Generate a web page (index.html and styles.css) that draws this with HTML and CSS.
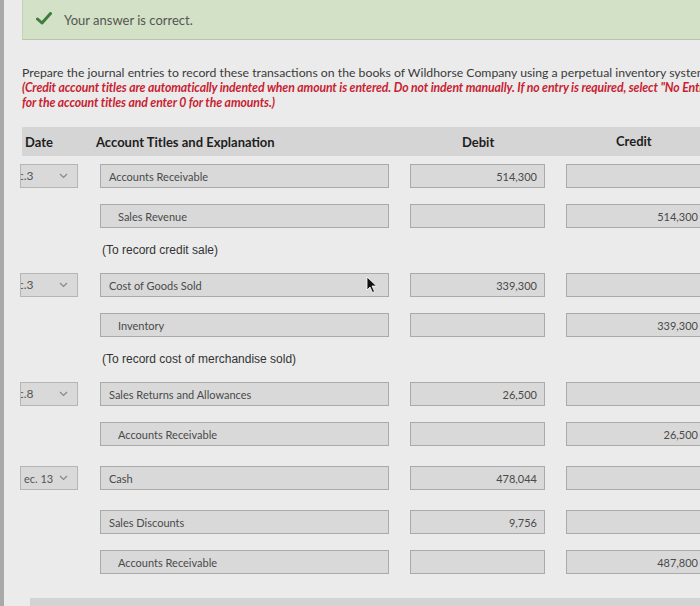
FILE: index.html
```html
<!DOCTYPE html>
<html>
<head>
<meta charset="utf-8">
<link rel="stylesheet" href="styles.css">
</head>
<body>
<div class="page">
  <div class="banner">
    <svg class="check" width="16" height="13" viewBox="0 0 16 13"><path d="M1.5 7 L6 11 L14.5 1.5" fill="none" stroke="#3f7d3c" stroke-width="3" stroke-linecap="round" stroke-linejoin="round"/></svg>
    <span class="banner-text">Your answer is correct.</span>
  </div>

  <p class="prompt">Prepare the journal entries to record these transactions on the books of Wildhorse Company using a perpetual inventory system.<br>
  <span class="note">(Credit account titles are automatically indented when amount is entered. Do not indent manually. If no entry is required, select "No Entry"<br>for the account titles and enter 0 for the amounts.)</span></p>

  <div class="head">
    <div class="h-date">Date</div>
    <div class="h-acct">Account Titles and Explanation</div>
    <div class="h-debit">Debit</div>
    <div class="h-credit">Credit</div>
  </div>

  <div class="rows">
    <div class="row">
      <div class="date"><span class="dtxt">c.3</span><svg class="chev" width="9" height="6" viewBox="0 0 9 6"><path d="M1 1 L4.5 4.5 L8 1" fill="none" stroke="#888" stroke-width="1.2"/></svg></div>
      <div class="box acct">Accounts Receivable</div>
      <div class="box amt debit">514,300</div>
      <div class="box amt credit"></div>
    </div>
    <div class="row">
      <div class="date-empty"></div>
      <div class="box acct cr">Sales Revenue</div>
      <div class="box amt debit"></div>
      <div class="box amt credit">514,300</div>
    </div>
    <div class="expl">(To record credit sale)</div>

    <div class="row">
      <div class="date"><span class="dtxt">c.3</span><svg class="chev" width="9" height="6" viewBox="0 0 9 6"><path d="M1 1 L4.5 4.5 L8 1" fill="none" stroke="#888" stroke-width="1.2"/></svg></div>
      <div class="box acct">Cost of Goods Sold</div>
      <div class="box amt debit">339,300</div>
      <div class="box amt credit"></div>
    </div>
    <div class="row">
      <div class="date-empty"></div>
      <div class="box acct cr">Inventory</div>
      <div class="box amt debit"></div>
      <div class="box amt credit">339,300</div>
    </div>
    <div class="expl">(To record cost of merchandise sold)</div>

    <div class="row">
      <div class="date"><span class="dtxt">c.8</span><svg class="chev" width="9" height="6" viewBox="0 0 9 6"><path d="M1 1 L4.5 4.5 L8 1" fill="none" stroke="#888" stroke-width="1.2"/></svg></div>
      <div class="box acct">Sales Returns and Allowances</div>
      <div class="box amt debit">26,500</div>
      <div class="box amt credit"></div>
    </div>
    <div class="row">
      <div class="date-empty"></div>
      <div class="box acct cr">Accounts Receivable</div>
      <div class="box amt debit"></div>
      <div class="box amt credit">26,500</div>
    </div>

    <div class="row spaced">
      <div class="date"><span class="dtxt wide">ec. 13</span><svg class="chev" width="9" height="6" viewBox="0 0 9 6"><path d="M1 1 L4.5 4.5 L8 1" fill="none" stroke="#888" stroke-width="1.2"/></svg></div>
      <div class="box acct">Cash</div>
      <div class="box amt debit">478,044</div>
      <div class="box amt credit"></div>
    </div>
    <div class="row spaced">
      <div class="date-empty"></div>
      <div class="box acct">Sales Discounts</div>
      <div class="box amt debit">9,756</div>
      <div class="box amt credit"></div>
    </div>
    <div class="row">
      <div class="date-empty"></div>
      <div class="box acct cr">Accounts Receivable</div>
      <div class="box amt debit"></div>
      <div class="box amt credit">487,800</div>
    </div>
  </div>

  <div class="footer-bar"></div>

  <svg class="cursor" width="12" height="18" viewBox="0 0 12 18"><path d="M1 1 L1 14 L4 11 L6.5 16.5 L8.5 15.5 L6 10 L10.5 10 Z" fill="#111" stroke="#fff" stroke-width="0.8"/></svg>
</div>
</body>
</html>
```

FILE: styles.css
```css
html, body {
  margin: 0;
  padding: 0;
}
body {
  width: 700px;
  height: 606px;
  overflow: hidden;
  background: #ebebeb;
  font-family: Lato, "Open Sans", sans-serif;
  color: #333;
}
.page {
  position: relative;
  width: 700px;
  height: 606px;
  overflow: hidden;
  border-left: 4px solid #a9a9a9;
  box-sizing: border-box;
}
.banner {
  margin-left: 18px;
  width: 720px;
  height: 40px;
  background: #d3e1c6;
  border-bottom: 1px solid #b7c5ab;
  border-left: 1px solid #c4d1b8;
  display: flex;
  align-items: center;
  box-sizing: border-box;
  padding-left: 13px;
}
.check {
  margin-right: 12px;
  margin-top: -2px;
}
.banner-text {
  font-size: 13px;
  color: #555;
}
.prompt {
  margin: 25px 0 0 18px;
  font-size: 12.25px;
  line-height: 15px;
  color: #3a3a3a;
  white-space: nowrap;
}
.note {
  color: #c81f33;
  font-style: italic;
  font-weight: 700;
  letter-spacing: -0.12px;
}
.head {
  margin: 17px 0 0 18px;
  width: 720px;
  height: 29px;
  background: #d5d5d5;
  display: grid;
  grid-template-columns: 74px 366px 154px 1fr;
  align-items: center;
  font-weight: 700;
  font-size: 13px;
  color: #1e1e1e;
}
.h-date { padding-left: 3px; }
.h-credit { margin-top: -2px; }
.rows {
  margin: 8px 0 0 16px;
  display: flex;
  flex-direction: column;
  gap: 16px;
}
.row {
  display: grid;
  grid-template-columns: 58px 290px 135px 140px;
  column-gap: 21px;
  height: 24px;
}
.row .acct { margin-left: 1px; }
.row.spaced { margin-top: 4px; }
.date {
  background: #d9d9d9;
  border: 1px solid #b5b5b5;
  box-sizing: border-box;
  display: flex;
  align-items: center;
  justify-content: space-between;
  padding: 0 9px 0 0;
  font-size: 12px;
  color: #555;
  overflow: hidden;
}
.dtxt {
  margin-left: -3px;
  margin-top: -2px;
}
.dtxt.wide {
  margin-left: 3px;
  margin-top: 0;
  font-size: 11px;
}
.box {
  background: #d9d9d9;
  border: 1px solid #aaaaaa;
  box-sizing: border-box;
  display: flex;
  align-items: center;
  font-size: 11px;
  color: #4a4a4a;
}
.acct {
  padding-left: 8px;
}
.acct.cr {
  padding-left: 17px;
}
.amt {
  justify-content: flex-end;
  padding-right: 7px;
}
.expl {
  font-family: "Liberation Sans", Arial, sans-serif;
  font-size: 12px;
  line-height: 13px;
  color: #333;
  padding-left: 82px;
}
.footer-bar {
  position: absolute;
  left: 26px;
  top: 598px;
  width: 700px;
  height: 10px;
  background: #d3d3d3;
}
.cursor {
  position: absolute;
  left: 362px;
  top: 276px;
}
```
